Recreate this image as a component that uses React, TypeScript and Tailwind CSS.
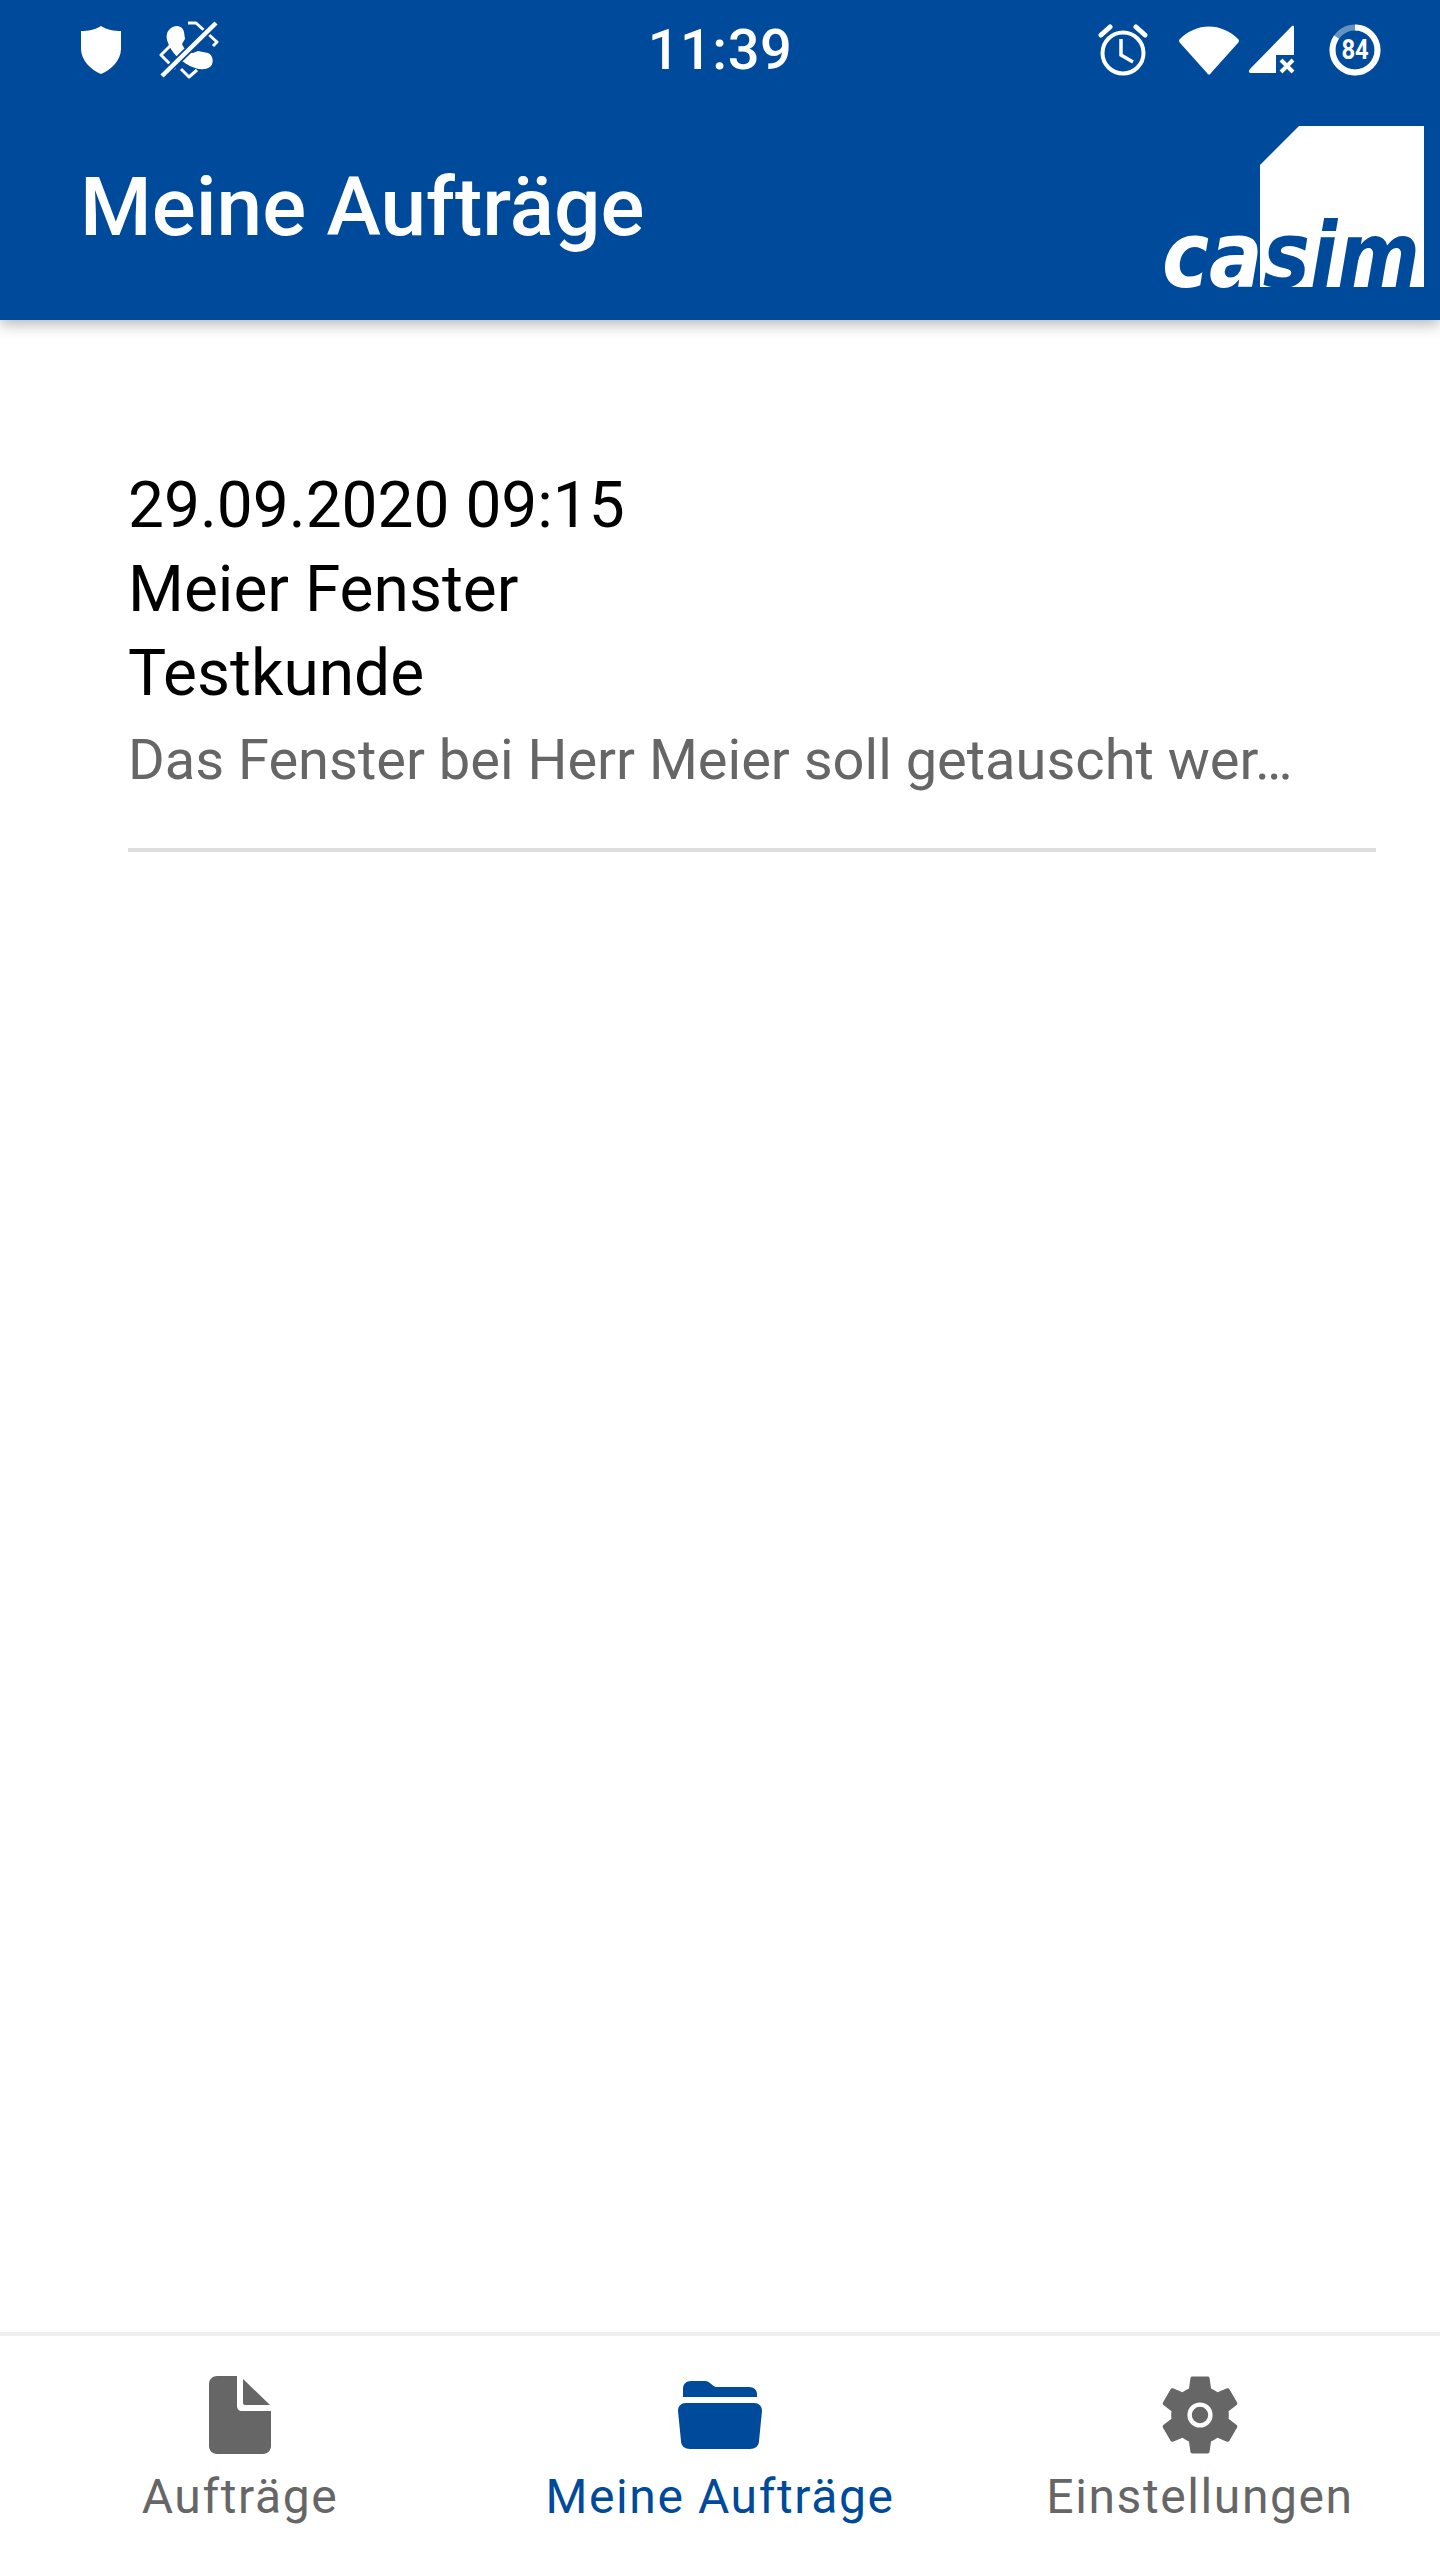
import type { ReactNode } from "react";

const BLUE = "#004a9b";

function ShieldIcon() {
  return (
    <svg width="44" height="50" viewBox="0 0 44 50" aria-hidden="true">
      <path d="M22 1 C28 5 35 6 42 6 L42 24 C42 35 32 45 22 49 C12 45 2 35 2 24 L2 6 C9 6 16 5 22 1Z" fill="#fff" />
    </svg>
  );
}

function PhoneOffIcon() {
  return (
    <svg width="62" height="58" viewBox="0 0 62 58" fill="none" aria-hidden="true">
      <path d="M13 23 L2 34 L16 48 M29 2 L37 2 L58 21 L54 25 M22 48 L30 56 L38 49" stroke="#fff" strokeWidth="3" strokeLinejoin="round" />
      <path d="M12 7 C17 3 24 5 25 11 L26 18 L23 23 C25 28 29 31 34 32 L39 30 L49 32 C54 34 55 41 52 45 C48 49 42 49 36 47 C22 42 12 32 8 19 C7 14 8 10 12 7Z" fill="#fff" />
      <path d="M3 55 L57 2" stroke={BLUE} strokeWidth="8" />
      <path d="M3 55 L57 2" stroke="#fff" strokeWidth="4.5" />
    </svg>
  );
}

function AlarmIcon() {
  return (
    <svg width="50" height="52" viewBox="0 0 50 52" fill="none" stroke="#fff" aria-hidden="true">
      <circle cx="25" cy="29" r="20.5" strokeWidth="4" />
      <path d="M23 15 L23 31 L35 38" strokeWidth="3.5" />
      <path d="M3 11 L12 3 M47 11 L38 3" strokeWidth="5" strokeLinecap="round" />
    </svg>
  );
}

function WifiIcon() {
  return (
    <svg width="62" height="50" viewBox="0 0 62 50" aria-hidden="true">
      <path d="M1 15 C18 -3 44 -3 61 15 C61 17 60 18 59 19 L33 48 C32 50 30 50 29 48 L3 19 C2 18 1 17 1 15Z" fill="#fff" />
    </svg>
  );
}

function SignalIcon() {
  return (
    <svg width="48" height="50" viewBox="0 0 48 50" fill="none" aria-hidden="true">
      <path d="M46 2 L46 30 L28 30 L28 48 L3 48 C1 48 0 46 2 44 L43 2 C44 1 46 0 46 2Z" fill="#fff" />
      <path d="M33 35 L45 47 M45 35 L33 47" stroke="#fff" strokeWidth="4" />
    </svg>
  );
}

function BatteryIcon() {
  return (
    <div className="relative flex size-[52px] items-center justify-center">
      <svg className="absolute inset-0" width="52" height="52" viewBox="0 0 52 52" fill="none" aria-hidden="true">
        <circle cx="26" cy="26" r="22.5" stroke="#fff" strokeOpacity="0.4" strokeWidth="6" />
        <circle cx="26" cy="26" r="22.5" stroke="#fff" strokeWidth="6" strokeDasharray="119 142" transform="rotate(-90 26 26)" />
      </svg>
      <span className="scale-x-[0.85] font-['Roboto',sans-serif] text-[28px] leading-none font-bold text-white">84</span>
    </div>
  );
}

function CasimLogo() {
  return (
    <svg width="264" height="184" viewBox="0 0 264 184" role="img" aria-label="casim">
      <defs>
        {/* the word is white on the blue bar and blue on the white block */}
        <linearGradient id="logo-word" gradientUnits="userSpaceOnUse" x1="0" y1="0" x2="264" y2="0">
          <stop offset="0.3788" stopColor="#fff" />
          <stop offset="0.3788" stopColor={BLUE} />
        </linearGradient>
      </defs>
      <polygon points="100,39 139,0 264,0 264,161 100,161" fill="#fff" />
      <text
        x="2"
        y="161"
        textLength="258"
        lengthAdjust="spacingAndGlyphs"
        fill="url(#logo-word)"
        className="font-['DejaVu_Sans',sans-serif]"
        fontSize="90"
        fontWeight="700"
        fontStyle="italic"
      >
        casim
      </text>
    </svg>
  );
}

function FileIcon() {
  return (
    <svg width="62" height="78" viewBox="0 0 62 78" aria-hidden="true">
      <path d="M8 0 L28 0 L28 30 C28 33 30 35 33 35 L62 35 L62 70 C62 75 58 78 54 78 L8 78 C4 78 0 75 0 70 L0 8 C0 3 4 0 8 0Z" fill="#666" />
      <path d="M34 3 L61 29 L36 29 C35 29 34 28 34 27Z" fill="#666" />
    </svg>
  );
}

function FolderIcon() {
  return (
    <svg width="84" height="68" viewBox="0 0 84 68" aria-hidden="true">
      <path d="M5 13 L5 8 C5 3 8 0 13 0 L27 0 C32 0 34 5 38 6 L71 6 C76 6 79 9 79 13 L79 16 L5 16Z" fill={BLUE} />
      <path d="M8 22 L76 22 C81 22 84 25 84 30 L81 60 C81 65 77 68 72 68 L12 68 C7 68 3 65 3 60 L0 30 C0 25 3 22 8 22Z" fill={BLUE} />
    </svg>
  );
}

function GearIcon() {
  return (
    <svg width="80" height="80" viewBox="2.2 2 19.6 20" aria-hidden="true">
      <path
        d="M19.14 12.94c.04-.3.06-.61.06-.94s-.02-.64-.07-.94l2.03-1.58c.18-.14.23-.41.12-.61l-1.92-3.32c-.12-.22-.37-.29-.59-.22l-2.39.96c-.5-.38-1.03-.7-1.62-.94l-.36-2.54c-.04-.24-.24-.41-.48-.41h-3.84c-.24 0-.43.17-.47.41l-.36 2.54c-.59.24-1.13.57-1.62.94l-2.39-.96c-.22-.08-.47 0-.59.22L2.74 8.87c-.12.21-.08.47.12.61l2.03 1.58c-.05.3-.09.63-.09.94s.02.64.07.94l-2.03 1.58c-.18.14-.23.41-.12.61l1.92 3.32c.12.22.37.29.59.22l2.39-.96c.5.38 1.03.7 1.62.94l.36 2.54c.05.24.24.41.48.41h3.84c.24 0 .44-.17.47-.41l.36-2.54c.59-.24 1.13-.56 1.62-.94l2.39.96c.22.08.47 0 .59-.22l1.92-3.32c.12-.22.07-.47-.12-.61l-2.01-1.58z"
        fill="#666"
      />
      <circle cx="12" cy="12" r="2.6" fill="#666" stroke="#fff" strokeWidth="1.1" />
    </svg>
  );
}

function NavItem({ icon, label, active }: { icon: ReactNode; label: string; active?: boolean }) {
  return (
    <div className="flex flex-col items-center">
      <div className="flex h-[80px] items-center justify-center">{icon}</div>
      <span
        className={`mt-[14px] text-[48px] leading-[56px] tracking-[1.6px] ${active ? "text-[#004a9b]" : "text-[#666666]"}`}
      >
        {label}
      </span>
    </div>
  );
}

export default function App() {
  return (
    <div className="flex h-[2560px] flex-col bg-white font-['Roboto',sans-serif]">
      <header className="relative z-10 h-[320px] shrink-0 bg-[#004a9b] shadow-[0_4px_14px_rgba(0,0,0,0.3)]">
        <div className="flex h-[100px] items-center justify-between pr-[59px] pl-[79px]">
          <div className="flex w-[270px] items-center gap-[36px]">
            <ShieldIcon />
            <PhoneOffIcon />
          </div>
          <span className="text-[56px] leading-none font-medium tracking-[0.5px] text-white">11:39</span>
          <div className="flex w-[290px] items-center justify-end">
            <AlarmIcon />
            <div className="ml-[30px]">
              <WifiIcon />
            </div>
            <div className="ml-[8px]">
              <SignalIcon />
            </div>
            <div className="ml-[33px]">
              <BatteryIcon />
            </div>
          </div>
        </div>
        <div className="flex items-start justify-between pr-[16px] pl-[80px]">
          <h1 className="mt-[59px] text-[82px] leading-[96px] font-medium text-white">Meine Aufträge</h1>
          <div className="mt-[26px]">
            <CasimLogo />
          </div>
        </div>
      </header>

      <main className="min-h-0 flex-1 pt-[144px] pr-[64px] pl-[128px]">
        <div className="border-b-[4px] border-[#dddddd] pb-[46px]">
          <p className="text-[64px] leading-[84px] text-black">29.09.2020 09:15</p>
          <p className="text-[64px] leading-[84px] text-black">Meier Fenster</p>
          <p className="text-[64px] leading-[84px] text-black">Testkunde</p>
          <p className="mt-[2px] text-[56px] leading-[84px] text-[#666666]">
            Das Fenster bei Herr Meier soll getauscht wer…
          </p>
        </div>
      </main>

      <nav className="grid h-[228px] shrink-0 grid-cols-3 border-t-[4px] border-[#eeeeee] pt-[39px]">
        <NavItem icon={<FileIcon />} label="Aufträge" />
        <NavItem icon={<FolderIcon />} label="Meine Aufträge" active />
        <NavItem icon={<GearIcon />} label="Einstellungen" />
      </nav>
    </div>
  );
}
